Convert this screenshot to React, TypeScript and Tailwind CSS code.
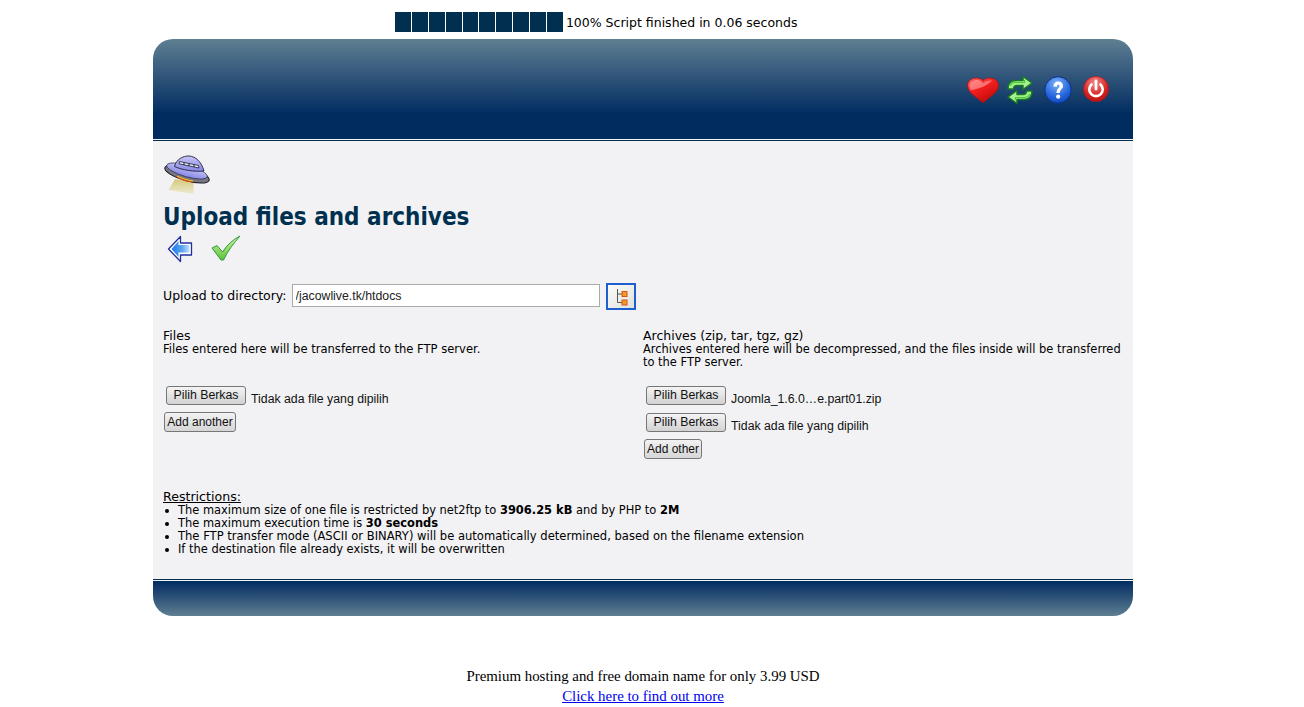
const dv = "font-['DejaVu_Sans','Liberation_Sans',sans-serif]";

function Heart() {
  return (
    <svg width="34" height="28" viewBox="0 0 34 28">
      <defs>
        <linearGradient id="h1" x1="0" y1="0" x2="0.6" y2="1">
          <stop offset="0" stopColor="#ff6a6a" />
          <stop offset="0.45" stopColor="#f52020" />
          <stop offset="1" stopColor="#c00a0a" />
        </linearGradient>
      </defs>
      <path d="M17 27 C11 21 1.500 17 1.500 9.500 C1.500 4.500 6 2 10.500 2 C13.500 2 15.500 3 17 4.500 C18.500 3 20.500 2 23.500 2 C28 2 32.500 4.500 32.500 9.500 C32.500 17 23 21 17 27Z" fill="url(#h1)" stroke="#a81010" strokeWidth="0.8" />
      <path d="M3.500 10 C3.500 6 8 3.500 12 4 C14.500 4.300 16 6 17 7 C19 5.500 22 4 26 4.500 C22 9.500 12 13.500 4.500 14Z" fill="#ffb0b0" opacity="0.55" />
    </svg>
  );
}

function Arrows() {
  return (
    <svg width="28" height="30" viewBox="0 0 28 30">
      <path d="M2 14 C2 7 6 5.500 10 5.500 L17 5.500 L17 1.500 L26 8 L17 14.500 L17 10.500 L11 10.500 C8.500 10.500 7.500 11.500 7.500 14Z" fill="#a6f08e" stroke="#167a22" strokeWidth="1.500" strokeLinejoin="round" />
      <path d="M26 16 C26 23 22 24.500 18 24.500 L11 24.500 L11 28.500 L2 22 L11 15.500 L11 19.500 L17 19.500 C19.500 19.500 20.500 18.500 20.500 16Z" fill="#a6f08e" stroke="#167a22" strokeWidth="1.500" strokeLinejoin="round" />
      <path d="M4.500 11 C5 8.500 7 7.500 10 7.500 L18.500 7.500 L18.500 5" fill="none" stroke="#4cc640" strokeWidth="1.200" />
      <path d="M23.500 19 C23 21.500 21 22.500 18 22.500 L9.500 22.500 L9.500 25" fill="none" stroke="#4cc640" strokeWidth="1.200" />
    </svg>
  );
}

function Help() {
  return (
    <svg width="28" height="28" viewBox="0 0 28 28">
      <defs>
        <radialGradient id="q1" cx="0.45" cy="0.25" r="0.85">
          <stop offset="0" stopColor="#7fb2f7" />
          <stop offset="0.6" stopColor="#2466dc" />
          <stop offset="1" stopColor="#0d3fa8" />
        </radialGradient>
      </defs>
      <circle cx="14" cy="14" r="13.300" fill="url(#q1)" stroke="#0a2f8a" strokeWidth="1" />
      <path d="M9.500 10.500 C9.500 7.500 11.500 5.500 14.300 5.500 C17.300 5.500 19 7.500 19 10 C19 13 15.800 13.400 15.800 17 L12.500 17 C12.500 12.500 15.500 12 15.500 10.300 C15.500 9.300 15 8.500 14.200 8.500 C13.300 8.500 12.900 9.500 12.900 10.700Z" fill="#ffffff" />
      <circle cx="14.200" cy="20.700" r="2.100" fill="#ffffff" />
    </svg>
  );
}

function Power() {
  return (
    <svg width="26" height="28" viewBox="0 0 26 28">
      <defs>
        <radialGradient id="p1" cx="0.45" cy="0.25" r="0.85">
          <stop offset="0" stopColor="#f28a8a" />
          <stop offset="0.6" stopColor="#d82222" />
          <stop offset="1" stopColor="#a80f0f" />
        </radialGradient>
      </defs>
      <circle cx="13" cy="14" r="12.600" fill="url(#p1)" stroke="#b01515" strokeWidth="0.7" />
      <path d="M8.500 9.500 A6.700 6.700 0 1 0 17.500 9.500" fill="none" stroke="#ffffff" strokeWidth="2.600" strokeLinecap="round" />
      <path d="M13 6 L13 14" stroke="#ffffff" strokeWidth="2.800" strokeLinecap="round" />
    </svg>
  );
}

function Ufo() {
  return (
    <svg width="48" height="42" viewBox="0 0 48 42">
      <defs>
        <linearGradient id="u1" x1="0" y1="0" x2="0" y2="1">
          <stop offset="0" stopColor="#c8c8f8" />
          <stop offset="1" stopColor="#8686e4" />
        </linearGradient>
        <linearGradient id="u2" x1="0" y1="0" x2="0" y2="1">
          <stop offset="0" stopColor="#d4c878" />
          <stop offset="1" stopColor="#ece6c4" stopOpacity="0.8" />
        </linearGradient>
      </defs>
      <path d="M11 24 L29.500 28 L29.500 39 L4.500 35Z" fill="url(#u2)" />
      <ellipse cx="23" cy="19" rx="23" ry="6.800" transform="rotate(16 23 19)" fill="#77777f" stroke="#15152a" strokeWidth="1" />
      <path d="M11 20 C16 23.500 24 26 31 27 C24 28 15 25 11 20Z" fill="#e8500c" />
      <path d="M13 21 C18 23.500 24 25.300 29 26" stroke="#f8cc18" strokeWidth="1" fill="none" />
      <ellipse cx="23" cy="16" rx="21" ry="5.800" transform="rotate(16 23 16)" fill="url(#u1)" stroke="#2a2a50" strokeWidth="0.7" />
      <path d="M10.500 11.500 C12 4.500 19 0.800 25 1 C32 1.500 37.500 7 40 16 C30 17 18 15 10.500 11.500Z" fill="url(#u1)" stroke="#202040" strokeWidth="0.9" />
      <path d="M15.500 6.500 L34.500 10.500 L35 13 L15 8.800Z" fill="#e6ecfc" stroke="#1d1d33" strokeWidth="0.8" />
      <path d="M20 7.500 L20 10 M25 8.500 L25 11 M30 9.500 L30 12" stroke="#1d1d33" strokeWidth="1" />
    </svg>
  );
}

function Back() {
  return (
    <svg width="26" height="28" viewBox="0 0 26 28">
      <defs>
        <linearGradient id="b1" x1="0" y1="0" x2="1" y2="0">
          <stop offset="0" stopColor="#1f78ea" />
          <stop offset="0.6" stopColor="#5da6ee" />
          <stop offset="1" stopColor="#c4e0f8" />
        </linearGradient>
      </defs>
      <path d="M13.500 1.500 L1.500 14 L13.500 26.500 L13.500 20 L24.500 20 L24.500 8 L13.500 8Z" fill="#ffffff" stroke="#1c2fa0" strokeWidth="1.300" strokeLinejoin="round" />
      <path d="M11.500 6 L4.500 14 L11.500 22 L11.500 17.500 L22.500 17.500 L22.500 10 L11.500 10Z" fill="url(#b1)" />
    </svg>
  );
}

function Check() {
  return (
    <svg width="30" height="26" viewBox="0 0 30 26">
      <defs>
        <linearGradient id="c1" x1="0" y1="0" x2="0" y2="1">
          <stop offset="0" stopColor="#d2f4a0" />
          <stop offset="1" stopColor="#5cc23c" />
        </linearGradient>
      </defs>
      <path d="M1 13 L6 10.500 L11.500 17 C16 10 22 4.500 29 1 C23 8 16.500 16 12.500 25 L10 25 Z" fill="url(#c1)" stroke="#2f9a3a" strokeWidth="1" strokeLinejoin="round" />
    </svg>
  );
}

function Tree() {
  return (
    <svg width="14" height="18" viewBox="0 0 14 18">
      <path d="M3.500 1 L3.500 14.500 L9 14.500 M3.500 6 L9 6" fill="none" stroke="#555" strokeWidth="1" />
      <rect x="8" y="3.500" width="5" height="5" fill="#f59a23" stroke="#d0561a" strokeWidth="1" />
      <rect x="8" y="12" width="5" height="5" fill="#f59a23" stroke="#d0561a" strokeWidth="1" />
    </svg>
  );
}

function Chooser({ name }: { name: string }) {
  return (
    <div className="flex items-start pl-[3px] font-['Liberation_Sans',sans-serif] text-[12.3px] text-[#111]">
      <button className="h-[19px] w-[80px] rounded-[3px] border border-[#777] bg-gradient-to-b from-[#f4f4f4] to-[#d2d2d2] text-[12.3px] leading-[15px]">
        Pilih Berkas
      </button>
      <span className="ml-[5px] mt-[6px] leading-[14px]">{name}</span>
    </div>
  );
}

function AddButton({ label, width }: { label: string; width: string }) {
  return (
    <button className={`ml-px block h-[20px] ${width} rounded-[3px] border border-[#777] bg-gradient-to-b from-[#f2f2f2] to-[#d6d6d6] font-['Liberation_Sans',sans-serif] text-[12px] leading-[16px] text-[#111]`}>
      {label}
    </button>
  );
}

function Bullet({ children, size }: { children: React.ReactNode; size: string }) {
  return (
    <li className={`flex h-[13px] items-center ${size}`}>
      <span className="ml-[2px] mr-[9px] h-[4px] w-[4px] rounded-full bg-black" />
      <span>{children}</span>
    </li>
  );
}

export default function App() {
  return (
    <div className={`min-h-[707px] bg-white ${dv} text-black`}>
      <div className="flex h-[39px] pl-[395px] pt-[12px]">
        <div className="flex h-[20px] gap-px">
          {Array.from({ length: 10 }).map((_, i) => (
            <div key={i} className="h-[20px] w-[15.9px] bg-[#002f50]" />
          ))}
        </div>
        <span className="ml-[3px] mt-px text-[12.5px] leading-[20px]">100% Script finished in 0.06 seconds</span>
      </div>

      <div className="ml-[153px] w-[980px]">
        <header className="flex h-[100px] items-start justify-end rounded-t-[20px] bg-gradient-to-b from-[#5f7f92] to-[#002c60] to-75% pr-[24px] pt-[36px]">
          <div className="mt-px"><Heart /></div>
          <div className="ml-[6px]"><Arrows /></div>
          <div className="ml-[10px] mt-px"><Help /></div>
          <div className="ml-[11px]"><Power /></div>
        </header>

        <main className="bg-[#f2f2f4] py-px">
          <div className="h-px bg-[#002f50]" />
          <div className="h-[438px] pl-[10px]">
            <div className="pl-px pt-[14px]"><Ufo /></div>
            <h1 className="mt-[5px] font-['DejaVu_Sans_Condensed','DejaVu_Sans',sans-serif] text-[24px] font-bold leading-[30px] text-[#00304f] [font-stretch:condensed]">Upload files and archives</h1>
            <div className="mt-[3px] flex items-start gap-[18px] pl-[4px]">
              <Back />
              <Check />
            </div>

            <div className="mt-[21px] flex h-[26px] items-start">
              <span className="mt-[4px] text-[12.5px] leading-[16px]">Upload to directory:</span>
              <input
                readOnly
                value="/jacowlive.tk/htdocs"
                className="ml-[5px] h-[23px] w-[308px] border border-[#aaa] bg-white pl-[3px] font-['Liberation_Sans',sans-serif] text-[12.3px] text-[#222] outline-none"
              />
              <button className="-mt-px ml-[6px] flex h-[27px] w-[30px] items-center justify-center border-2 border-[#1e5fd0] bg-gradient-to-br from-[#fafaf8] to-[#e2e2dc]">
                <Tree />
              </button>
            </div>

            <div className="mt-[20px] grid grid-cols-[480px_490px]">
              <div>
                <div className="mb-px text-[12.5px] leading-[12px]">Files</div>
                <p className="text-[11.55px] leading-[13px]">Files entered here will be transferred to the FTP server.</p>
                <div className="mt-[30px]"><Chooser name="Tidak ada file yang dipilih" /></div>
                <div className="mt-[6px]"><AddButton label="Add another" width="w-[72px]" /></div>
              </div>
              <div>
                <div className="mb-px text-[12.5px] leading-[12px]">Archives (zip, tar, tgz, gz)</div>
                <p className="text-[11.45px] leading-[13px]">Archives entered here will be decompressed, and the files inside will be transferred to the FTP server.</p>
                <div className="mt-[17px]"><Chooser name="Joomla_1.6.0…e.part01.zip" /></div>
                <div className="mt-[7px]"><Chooser name="Tidak ada file yang dipilih" /></div>
                <div className="mt-[6px]"><AddButton label="Add other" width="w-[58px]" /></div>
              </div>
            </div>

            <div className="mt-[31px]">
              <div className="text-[12.6px] leading-[14px] underline">Restrictions:</div>
              <ul className="leading-[13px]">
                <Bullet size="text-[11.45px]">The maximum size of one file is restricted by net2ftp to <b>3906.25 kB</b> and by PHP to <b>2M</b></Bullet>
                <Bullet size="text-[11.45px]">The maximum execution time is <b>30 seconds</b></Bullet>
                <Bullet size="text-[11.55px]">The FTP transfer mode (ASCII or BINARY) will be automatically determined, based on the filename extension</Bullet>
                <Bullet size="text-[11.45px]">If the destination file already exists, it will be overwritten</Bullet>
              </ul>
            </div>
          </div>
          <div className="h-px bg-[#002f50]" />
        </main>

        <footer className="h-[35px] rounded-b-[20px] bg-gradient-to-b from-[#002c60] to-[#5f7f92]" />
      </div>

      <div className="w-[1286px] pt-[50px] text-center font-['Liberation_Serif',serif] text-[14.9px] leading-[20px]">
        <div>Premium hosting and free domain name for only 3.99 USD</div>
        <a href="#" className="text-[#0000ee] underline">Click here to find out more</a>
      </div>
    </div>
  );
}
